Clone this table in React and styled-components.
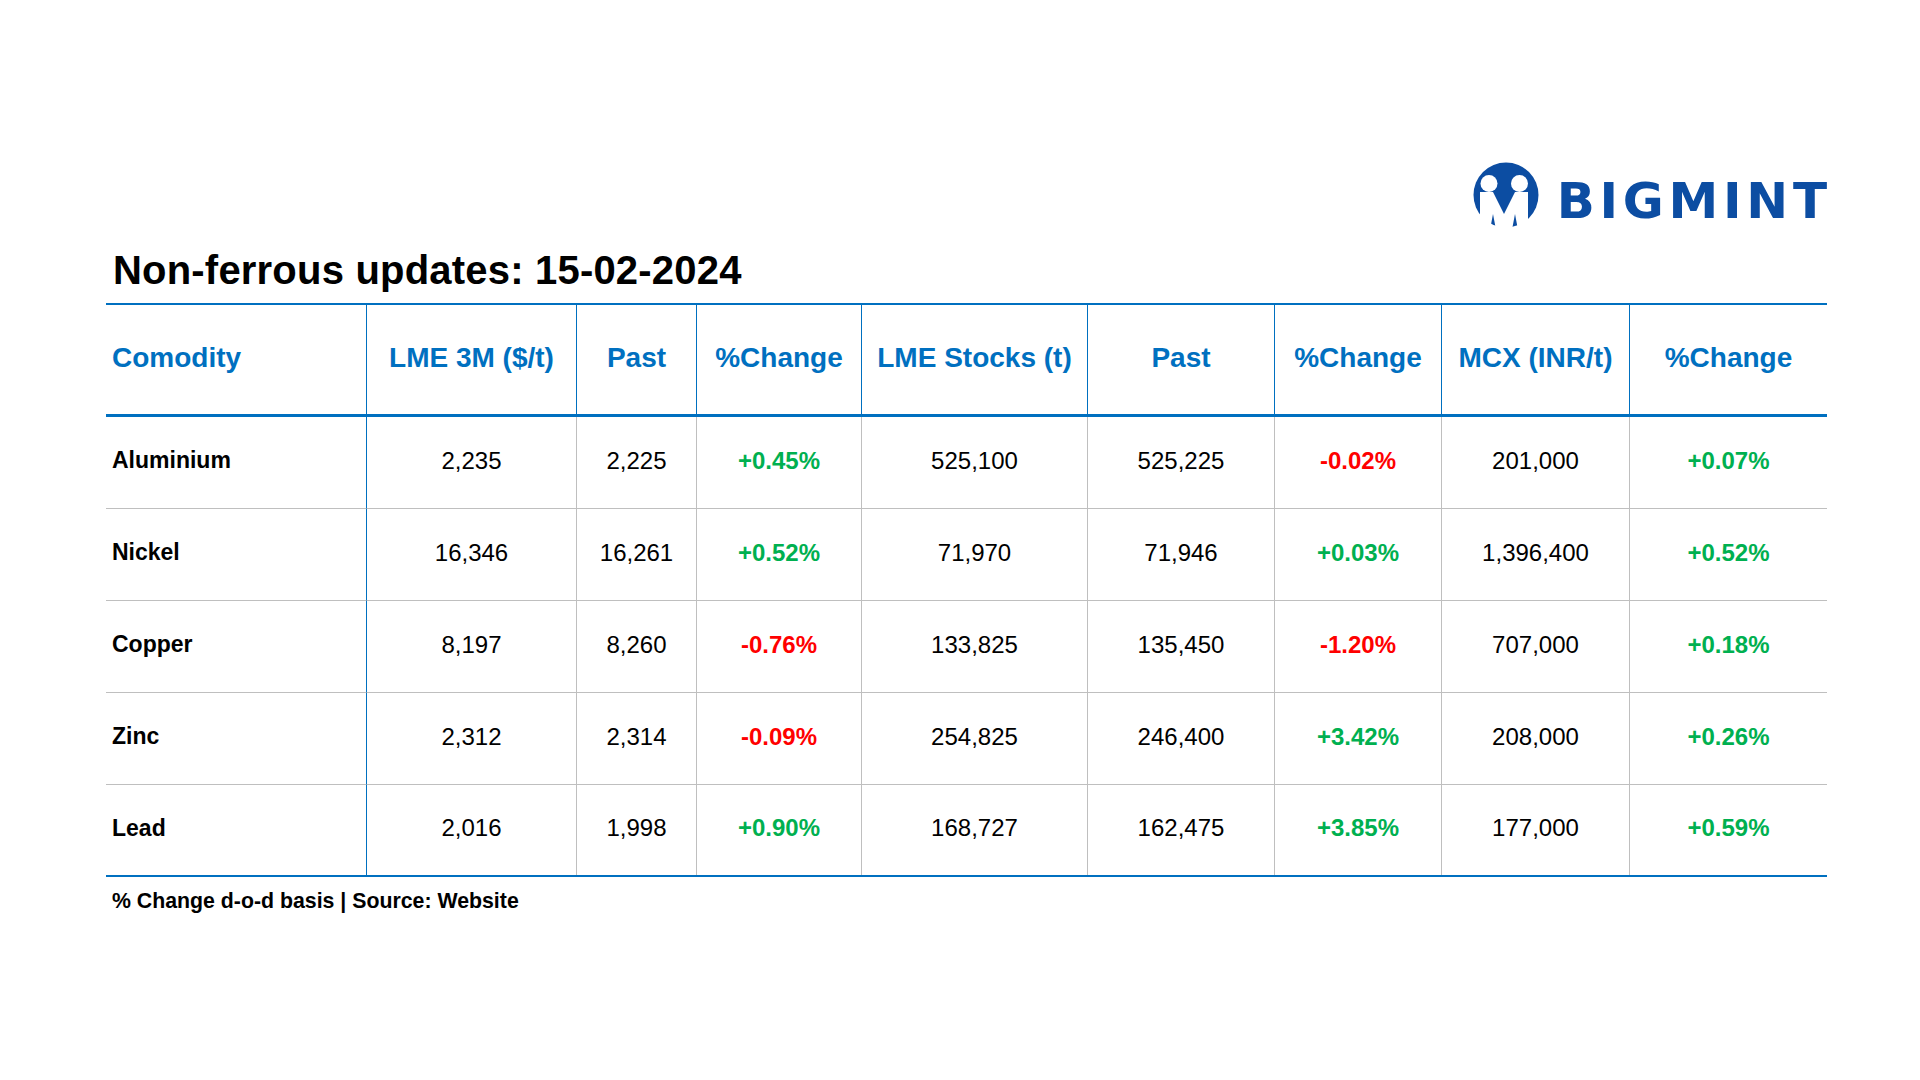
import { createGlobalStyle, styled } from "styled-components"

const GlobalStyle = createGlobalStyle`
  html, body {
    margin: 0;
    padding: 0;
    background: #fff;
  }
  body {
    font-family: "Liberation Sans", Arial, sans-serif;
    color: #000;
  }
`

const BLUE = '#0070c0'
const GRID_GRAY = '#bfbfbf'

const columns = [
    { label: 'Comodity', width: 261, align: 'left' },
    { label: 'LME 3M ($/t)', width: 210 },
    { label: 'Past', width: 120 },
    { label: '%Change', width: 165, change: true },
    { label: 'LME Stocks (t)', width: 226 },
    { label: 'Past', width: 187 },
    { label: '%Change', width: 167, change: true },
    { label: 'MCX (INR/t)', width: 188 },
    { label: '%Change', width: 197, change: true },
]

const rows = [
    ['Aluminium', '2,235', '2,225', '+0.45%', '525,100', '525,225', '-0.02%', '201,000', '+0.07%'],
    ['Nickel', '16,346', '16,261', '+0.52%', '71,970', '71,946', '+0.03%', '1,396,400', '+0.52%'],
    ['Copper', '8,197', '8,260', '-0.76%', '133,825', '135,450', '-1.20%', '707,000', '+0.18%'],
    ['Zinc', '2,312', '2,314', '-0.09%', '254,825', '246,400', '+3.42%', '208,000', '+0.26%'],
    ['Lead', '2,016', '1,998', '+0.90%', '168,727', '162,475', '+3.85%', '177,000', '+0.59%'],
]

function LogoMark() {
    return (
        <Mark viewBox="-33 -33 66 66" width="66" height="66">
            <circle cx="0" cy="0" r="32.5" fill="#0c4da2" />
            <circle cx="-17" cy="-11.5" r="8.5" fill="#fff" />
            <circle cx="13.5" cy="-11.5" r="8.5" fill="#fff" />
            <polygon
                fill="#fff"
                points="-26,-3 -13,-3 -2,19 9,-3 22,-3 22,40 13,40 9,19 5,40 -9,40 -13,19 -17,40 -26,40"
            />
        </Mark>
    )
}

function App() {
    return (
        <>
            <GlobalStyle />
            <Wrapper>
                <LogoRow>
                    <LogoMark />
                    <LogoText>BIGMINT</LogoText>
                </LogoRow>
                <Title>Non-ferrous updates: 15-02-2024</Title>
                <Table>
                    {columns.map((col, i) => (
                        <HeadCell key={'h' + i} $align={col.align} $last={i === columns.length - 1}>
                            {col.label}
                        </HeadCell>
                    ))}
                    {rows.map((row, r) =>
                        row.map((value, c) => {
                            const col = columns[c]
                            const tone = col.change ? (value.startsWith('-') ? 'down' : 'up') : null
                            return (
                                <Cell
                                    key={r + '-' + c}
                                    $align={col.align}
                                    $first={c === 0}
                                    $last={c === columns.length - 1}
                                    $lastRow={r === rows.length - 1}
                                    $tone={tone}
                                >
                                    {value}
                                </Cell>
                            )
                        })
                    )}
                </Table>
                <Note>% Change d-o-d basis | Source: Website</Note>
            </Wrapper>
        </>
    )
}

const Wrapper = styled.div`
 width: 1721px;
 margin-left: 106px;
 padding-top: 162px;
`

const LogoRow = styled.div`
 display: flex;
 justify-content: flex-end;
 align-items: center;
 gap: 18px;
 height: 66px;
`

const Mark = styled.svg`
 display: block;
 flex: none;
`

const LogoText = styled.div`
 font-family: "DejaVu Sans", sans-serif;
 font-weight: 700;
 font-size: 50px;
 line-height: 50px;
 letter-spacing: 4.7px;
 margin-right: -4.7px;
 padding-top: 12px;
 color: #0c4da2;
`

const Title = styled.h1`
 margin: 18px 0 9px;
 padding-left: 7px;
 font-size: 40px;
 line-height: 48px;
 font-weight: 700;
 letter-spacing: 0.2px;
 color: #000;
`

const Table = styled.div`
 display: grid;
 grid-template-columns: ${columns.map(c => c.width + 'px').join(' ')};
 border-top: 2px solid ${BLUE};
 border-bottom: 2px solid ${BLUE};
`

const HeadCell = styled.div`
 box-sizing: border-box;
 height: 112px;
 display: flex;
 align-items: center;
 justify-content: ${p => (p.$align === 'left' ? 'flex-start' : 'center')};
 padding-left: ${p => (p.$align === 'left' ? '6px' : '0')};
 padding-bottom: 3px;
 border-bottom: 3px solid ${BLUE};
 border-right: ${p => (p.$last ? 'none' : `1px solid ${BLUE}`)};
 color: ${BLUE};
 font-size: 28px;
 font-weight: 700;
 white-space: nowrap;
`

const toneColor = {
    up: '#00b050',
    down: '#ff0000',
}

const Cell = styled.div`
 box-sizing: border-box;
 height: ${p => (p.$lastRow ? '90px' : '92px')};
 display: flex;
 align-items: center;
 justify-content: ${p => (p.$align === 'left' ? 'flex-start' : 'center')};
 padding-left: ${p => (p.$align === 'left' ? '6px' : '0')};
 padding-bottom: 4px;
 border-bottom: ${p => (p.$lastRow ? 'none' : `1px solid ${GRID_GRAY}`)};
 border-right: ${p => (p.$last ? 'none' : `1px solid ${p.$first ? BLUE : GRID_GRAY}`)};
 font-size: ${p => (p.$first ? '23px' : '24px')};
 font-weight: ${p => (p.$first || p.$tone ? 700 : 400)};
 color: ${p => (p.$tone ? toneColor[p.$tone] : '#000')};
 white-space: nowrap;
`

const Note = styled.div`
 margin-top: 12px;
 padding-left: 6px;
 font-size: 21.3px;
 line-height: 24px;
 font-weight: 700;
`

export default App
